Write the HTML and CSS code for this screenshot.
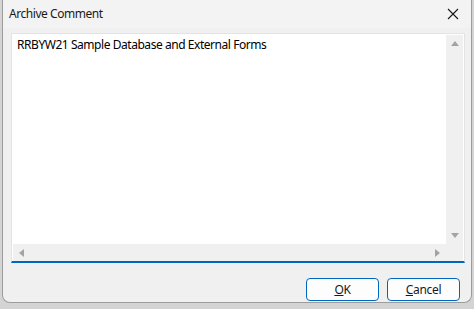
FILE: index.html
```html
<!DOCTYPE html>
<html lang="en">
<head>
  <meta charset="UTF-8" />
  <title>Archive Comment</title>
  <link rel="stylesheet" href="styles.css">
</head>
<body>
  <div class="window">
    <div class="titlebar">
      <span class="title">Archive Comment</span>
      <svg class="close" width="12" height="12" viewBox="0 0 12 12">
        <path d="M1 1 L11 11 M11 1 L1 11" stroke="#1a1a1a" stroke-width="1.1" fill="none" />
      </svg>
    </div>
    <div class="content">
      <div class="editor">
        <div class="editor-main">
          <div class="text">RRBYW21 Sample Database and External Forms</div>
          <div class="vscroll">
            <span class="arrow up"></span>
            <span class="arrow down"></span>
          </div>
        </div>
        <div class="hscroll-row">
          <div class="hscroll">
            <span class="arrow left"></span>
            <span class="arrow right"></span>
          </div>
          <div class="corner"></div>
        </div>
      </div>
      <div class="buttons">
        <button><u>O</u>K</button>
        <button><u>C</u>ancel</button>
      </div>
    </div>
  </div>
</body>
</html>
```
FILE: styles.css
```css
body {
  margin: 0;
  background: #d4d4d4;
  font-family: "Noto Sans", "Open Sans", sans-serif;
  font-size: 12px;
  letter-spacing: -0.45px;
  color: #000;
}
.window {
  margin-left: 2px;
  width: 468px;
  height: 302px;
  background: #f0f0f0;
  border: 1px solid #9c9c9c;
  border-top: none;
  border-radius: 0 0 8px 8px;
  display: flex;
  flex-direction: column;
  overflow: hidden;
}
.titlebar {
  height: 28px;
  background: #f3f3f3;
  display: flex;
  align-items: center;
  justify-content: space-between;
  padding: 0 12px 0 6px;
}
.title {
  font-size: 12px;
  color: #1a1a1a;
  padding-bottom: 2px;
}
.close {
  display: block;
}
.content {
  flex: 1;
  padding: 5px 6px 0 8px;
  display: flex;
  flex-direction: column;
}
.editor {
  height: 226px;
  background: #fff;
  border: 1px solid #e3e3e3;
  border-bottom: 2px solid #0067c0;
  display: flex;
  flex-direction: column;
  padding: 1px 1px 0 1px;
}
.editor-main {
  flex: 1;
  display: flex;
}
.text {
  flex: 1;
  padding: 1px 0 0 4px;
  font-size: 12px;
}
.vscroll {
  width: 17px;
  background: #f0f0f0;
  display: flex;
  flex-direction: column;
  justify-content: space-between;
  align-items: center;
  padding: 6px 0 6px;
}
.hscroll-row {
  display: flex;
  height: 17px;
}
.hscroll {
  flex: 1;
  background: #f0f0f0;
  display: flex;
  justify-content: space-between;
  align-items: center;
  padding: 0 6px;
}
.corner {
  width: 17px;
  background: #f0f0f0;
}
.arrow {
  width: 0;
  height: 0;
  border: 4px solid transparent;
}
.arrow.up {
  border-top: none;
  border-bottom: 5px solid #a3a3a3;
}
.arrow.down {
  border-bottom: none;
  border-top: 5px solid #a3a3a3;
}
.arrow.left {
  border-left: none;
  border-right: 5px solid #a3a3a3;
}
.arrow.right {
  border-right: none;
  border-left: 5px solid #a3a3a3;
}
.buttons {
  display: flex;
  justify-content: flex-end;
  gap: 8px;
  padding: 15px 5px 0 0;
}
button {
  width: 73px;
  height: 23px;
  background: #fdfdfd;
  border: 1px solid #0067c0;
  border-radius: 4px;
  font-family: "Noto Sans", "Open Sans", sans-serif;
  font-size: 12px;
  letter-spacing: -0.3px;
  color: #1a1a1a;
  padding: 0;
}
```
